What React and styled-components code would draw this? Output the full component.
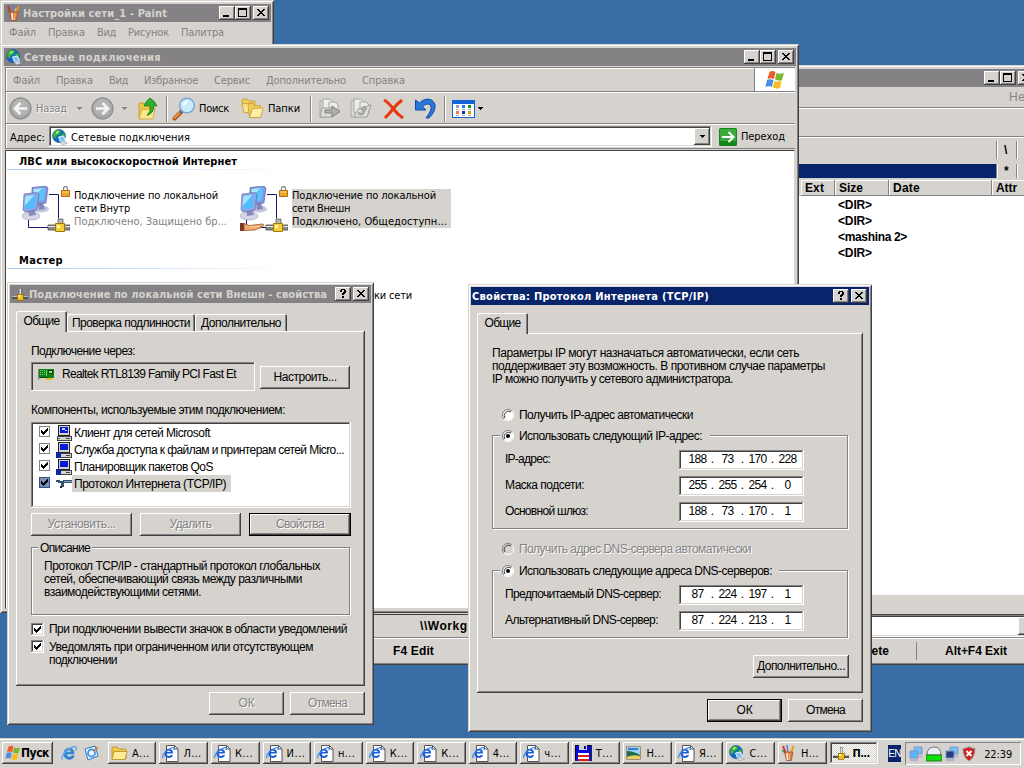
import React, { useLayoutEffect, useRef, useState } from 'react';
import styled, { createGlobalStyle, css } from 'styled-components';

const FACE = '#d6d3ce';
const SHADOW = '#848284';
const DARK = '#424142';
const NAVY = '#08246b';

const TAHOMA = '"DejaVu Sans Condensed", "DejaVu Sans", sans-serif';
const SANS = '"Liberation Sans", Arial, sans-serif';

const raised = css`
  box-shadow: inset -1px -1px ${DARK}, inset 1px 1px #fff, inset -2px -2px ${SHADOW};
`;
const sunken = css`
  box-shadow: inset -1px -1px #fff, inset 1px 1px ${SHADOW}, inset -2px -2px ${FACE}, inset 2px 2px ${DARK};
`;

const GlobalStyle = createGlobalStyle`
  *, *::before, *::after { box-sizing: border-box; }
  html, body { margin: 0; padding: 0; overflow: hidden; }
  svg { display: block; flex: none; }
`;

const Desktop = styled.div`
  position: relative;
  width: 1024px;
  height: 768px;
  overflow: hidden;
  background: #396da5;
  font-family: ${TAHOMA};
  font-stretch: condensed;
  font-size: 11px;
  line-height: 13px;
  color: #000;
`;

/* ---------- text set to a fixed run width ---------- */

const Run = styled.span`
  display: inline-block;
  flex: none;
  white-space: pre;
  font-family: ${(p) => (p.$sans ? SANS : TAHOMA)};
  font-stretch: ${(p) => (p.$sans ? 'normal' : 'condensed')};
  font-size: ${(p) => p.$size || (p.$sans ? 12 : 11)}px;
  font-weight: ${(p) => (p.$bold ? 700 : 400)};
  ${(p) => p.$off && css`color: ${SHADOW};`}
  ${(p) => p.$emboss && css`color: ${SHADOW}; text-shadow: 1px 1px #fff;`}
`;

function Text({ w, sans, bold, off, emboss, size, children }) {
  const ref = useRef(null);
  const [spacing, setSpacing] = useState(0);
  useLayoutEffect(() => {
    const range = document.createRange();
    range.selectNodeContents(ref.current);
    const natural = range.getBoundingClientRect().width;
    setSpacing((w - natural) / String(children).length);
  }, [w, children]);
  return (
    <Run ref={ref} $sans={sans} $bold={bold} $off={off} $emboss={emboss} $size={size}
      style={{ width: w, letterSpacing: spacing }}>
      {children}
    </Run>
  );
}

/* ---------- window chrome ---------- */

const Frame = styled.section`
  position: absolute;
  left: ${(p) => p.$x}px;
  top: ${(p) => p.$y}px;
  width: ${(p) => p.$w}px;
  height: ${(p) => p.$h}px;
  padding: ${(p) => (p.$sizable ? '4px 3px 4px 4px' : '3px')};
  display: flex;
  flex-direction: column;
  background: ${FACE};
  box-shadow: inset 1px 1px ${FACE}, inset -1px -1px ${DARK}, inset 2px 2px #fff, inset -2px -2px ${SHADOW};
`;
const TitleBar = styled.header`
  flex: none;
  height: 18px;
  display: flex;
  align-items: center;
  padding: 0 2px;
  background: ${(p) => (p.$active ? NAVY : SHADOW)};
  color: ${(p) => (p.$active ? '#fff' : FACE)};
`;
const TitleText = styled.div`
  flex: 1;
  display: flex;
  margin-left: ${(p) => p.$gap}px;
`;
const CaptionBox = styled.div`
  width: 16px;
  height: 14px;
  margin-left: ${(p) => (p.$gap ? 2 : 0)}px;
  background: ${FACE};
  ${raised}
`;

function CaptionButton({ kind }) {
  return (
    <CaptionBox $gap={kind === 'close'}>
      <svg width="16" height="14" viewBox="0 0 16 14" shapeRendering="crispEdges" fill="none" stroke="#000">
        {kind === 'min' && <path d="M4 10h6" strokeWidth="2" />}
        {kind === 'max' && <><path d="M3.500 3.500h8v7h-8z" /><path d="M3 3h9" strokeWidth="2" /></>}
        {kind === 'close' && (
          <path fill="#000" stroke="none" d="M4 3h2v1h1v1h2v-1h1v-1h2v1h-1v1h-1v1h-1v1h1v1h1v1h1v1h-2v-1h-1v-1h-2v1h-1v1h-2v-1h1v-1h1v-1h1v-1h-1v-1h-1v-1h-1z" />
        )}
        {kind === 'help' && (
          <path fill="#000" stroke="none" d="M5 3h1v-1h4v1h1v3h-1v1h-1v1h-2v-2h1v-1h1v-2h-2v2h-2zM7 9h2v2h-2z" />
        )}
      </svg>
    </CaptionBox>
  );
}

function Caption({ icon, title, w, gap = 2, active, buttons }) {
  return (
    <TitleBar $active={active}>
      {icon}
      <TitleText $gap={gap}>{title && <Text w={w} bold>{title}</Text>}</TitleText>
      {buttons.map((b) => <CaptionButton key={b} kind={b} />)}
    </TitleBar>
  );
}

/* ---------- icons ---------- */

const Flag = ({ s = 20 }) => (
  <svg width={s} height={s} viewBox="0 0 20 20">
    <path d="M4.500 2q3-2 6 0l-1.500 7q-3-1.500-6.500 0z" fill="#ef5a29" />
    <path d="M11.500 3q3 1.500 7.500 0l-2 7q-3 1.500-7-.5z" fill="#7bb82e" />
    <path d="M2 10q3-1.600 6.500 0l-1.600 7q-3-1.600-6.500 0z" fill="#4a8ee6" />
    <path d="M9.500 11q3 1.600 7.200 0l-1.700 7q-3 1.500-7.200-.4z" fill="#f8bd1c" />
  </svg>
);

const Globe = () => (
  <svg width="16" height="16" viewBox="0 0 16 16">
    <circle cx="7" cy="7" r="6.500" fill="#1668c4" stroke="#0d4a8e" strokeWidth=".6" />
    <path d="M3 2q3-2 6 0l-1 3-3 1-1 3-3-1q-.5-4 2-6zM9 6l3-2q1.500 2 1 5l-3 1z" fill="#38b536" />
    <path d="M4 3q2-1.500 3-1l-1 2-2 1z" fill="#b8f08c" />
    <path d="M6.500 8l5-1 2 5-5 1z" fill="#7cc4f8" stroke="#e4eef8" />
    <path d="M8 13.500l5-1 2.500 1.500-5 1.800z" fill="#dfe4ea" stroke="#788494" strokeWidth=".5" />
  </svg>
);

const Cup = () => (
  <svg width="16" height="16" viewBox="0 0 16 16">
    <path d="M2 1l3 8" stroke="#d83018" strokeWidth="2" />
    <path d="M6 0l1 9" stroke="#6a7ed8" strokeWidth="1.600" />
    <path d="M12.500 1l-3 8" stroke="#e89818" strokeWidth="2" />
    <path d="M1 5l4 4" stroke="#38a030" strokeWidth="1.200" />
    <path d="M10 3l-2 6" stroke="#e8d060" />
    <path d="M3.500 7h8.500l-1.700 8.500H5.500z" fill="#dc7a50" stroke="#9a4a30" strokeWidth=".7" />
    <path d="M6 8l.6 7" stroke="#fff0e4" strokeWidth="1.600" />
    <path d="M9 8l-.5 7" stroke="#f0c040" />
  </svg>
);

const Tee = ({ s = 16 }) => (
  <svg width={s} height={s} viewBox="0 0 16 16" shapeRendering="crispEdges">
    <path d="M7 2h2v6h-2z" fill="#e8e8e0" stroke="#555" strokeWidth=".5" />
    <path d="M0 10h16v3h-16z" fill="#555" />
    <path d="M0 10h16v1h-16z" fill="#b8b8b8" />
    <path d="M5 8h6v6h-6z" fill="#f0c020" stroke="#8c6400" strokeWidth=".7" />
    <path d="M6 9h2v2h-2z" fill="#fff4a0" />
  </svg>
);

const Connection = ({ shared }) => (
  <svg width="48" height="50" viewBox="0 0 48 50">
    <path d="M27 8.500h9.500v24M6.500 34v7.500h20" fill="none" stroke="#18186b" />
    <ellipse cx="19" cy="23" rx="8" ry="3.500" fill="#c4c6dc" />
    <path d="M16 17l5 0 2 6-6 1z" fill="#8488b8" />
    <path d="M10 1.500l14-1.500 2 2-2 15-14 2z" fill="#8b92d8" stroke="#5860a8" strokeWidth=".6" />
    <path d="M11.500 3l12-1.500-1.500 13-11 2z" fill="#5cc4fc" />
    <path d="M11.500 3l9-1-9 9z" fill="#a8e6ff" />
    <ellipse cx="9" cy="30" rx="9" ry="4" fill="#d4d6e6" stroke="#9a9cb8" strokeWidth=".6" />
    <path d="M6 23l6-1 2 7-7 1z" fill="#8a8cbc" />
    <path d="M2 8l13-1.500 2 1.500-2 16-12 2-2-2z" fill="#9aa0e0" stroke="#5860a8" strokeWidth=".6" />
    <path d="M3.500 10l11-1.500-1.500 13.500-10 2z" fill="#54bcfa" />
    <path d="M3.500 10l9-1-10 11z" fill="#a4e4ff" />
    <path d="M41.500 5v-2q0-2.500 2-2.500t2 2.500v2" fill="none" stroke="#888" strokeWidth="1.300" />
    <path d="M39.500 4.500h8v6h-8z" fill="#eda52c" stroke="#b06c10" />
    <path d="M40 6h7" stroke="#ffd780" />
    <path d="M36 33h5v6h-5z" fill="#b4b6b4" stroke="#606060" strokeWidth=".8" />
    <path d="M26 39h22v5h-22z" fill="#8c8e8c" stroke="#484848" strokeWidth=".8" />
    <path d="M26 40.500h22" stroke="#e4e4e4" />
    <path d="M33.500 37.500h9v8h-9z" fill="#f3cf38" stroke="#a07808" />
    <path d="M35 39h3v3h-3z" fill="#fff8b8" />
    {shared && <>
      <path d="M0 37h4v8h-4z" fill="#7a3c28" />
      <path d="M4 37.500q6 3.500 10 1.500l8-1q3 0 1 2.500l-8 3.500-11 .5z" fill="#f0a868" stroke="#8a4818" strokeWidth=".7" />
      <path d="M10 41l9-.5" stroke="#ffdcb0" />
    </>}
  </svg>
);

const RoundArrow = ({ flip }) => (
  <svg width="23" height="23" viewBox="0 0 23 23">
    <circle cx="11.500" cy="11.500" r="10.700" fill="#a5a5a5" stroke="#858585" />
    <circle cx="11.500" cy="10.500" r="8.500" fill="#b4b4b4" />
    <path transform={flip ? 'translate(23 0) scale(-1 1)' : undefined} d="M18 11.500H6M11.500 6L6 11.500l5.500 5.500" fill="none" stroke="#f4f4f4" strokeWidth="2.600" />
  </svg>
);

const FolderUp = () => (
  <svg width="20" height="24" viewBox="0 0 20 24">
    <path d="M1 7l1-1h4l1 2h7v13h-13z" fill="#f0c848" stroke="#c09428" strokeWidth=".8" />
    <path d="M1 22l3-10 4 1 1-1 8-1-2 11z" fill="#fce88c" stroke="#caa030" strokeWidth=".8" />
    <path d="M9 18.500q4-4.500 3-9.500h-6q2-5.500 6-8 5 3 7 8h-3.500q1 7-6.500 9.500z" fill="#2fae2c" stroke="#157214" strokeWidth=".7" />
  </svg>
);

const Magnifier = () => (
  <svg width="24" height="24" viewBox="0 0 24 24">
    <path d="M9.500 14.500L2.500 21.500" stroke="#9c4c18" strokeWidth="4" strokeLinecap="round" />
    <path d="M9.500 14L2.500 21" stroke="#f39548" strokeWidth="2.200" strokeLinecap="round" />
    <path d="M11.500 12.500L8 16" stroke="#5868a0" strokeWidth="2.500" />
    <circle cx="15" cy="8.500" r="7.300" fill="#c9ecfd" stroke="#7fa4d8" strokeWidth="1.500" />
    <path d="M11 9q0-5 5-5.500-1 4-5 5.500z" fill="#fff" />
  </svg>
);

const Folders = () => (
  <svg width="23" height="21" viewBox="0 0 23 21">
    <path d="M1 3l1-2h4l2 2h6v11h-11z" fill="#f3cc54" stroke="#c49a30" strokeWidth=".8" />
    <path d="M3 15l-2-9 11-1 3 8z" fill="#fbe48a" stroke="#c49a30" strokeWidth=".8" />
    <path d="M7 7l1-1.500h4l1.500 2h6v12h-11z" fill="#f3cc54" stroke="#c49a30" strokeWidth=".8" />
    <path d="M8.500 19.500l3-9 10.500-.7-2.500 9.700z" fill="#fdf0a4" stroke="#c49a30" strokeWidth=".8" />
  </svg>
);

const MoveTo = ({ copy }) => (
  <svg width="22" height="21" viewBox="0 0 22 21">
    <path d="M1 3h5l1 2v14h-6z" fill="#d8d8d4" stroke="#a8a8a4" />
    <path d="M4 1h7l3 3v11h-10z" fill="#ecece8" stroke="#a8a8a4" />
    <path d="M10 4h6l3 3v8h-9z" fill="#ecece8" stroke="#a8a8a4" />
    <path d={copy ? 'M4 19l4-8 13-4-4 12z' : 'M1 19l2-9h12l-2 9z'} fill="#dcdcd8" stroke="#a0a09c" />
    {copy
      ? <path d="M8 14q5 4 5-3l-2 1 3-4 3 3h-2q0 8-7 5" fill="#bbb" stroke="#858583" strokeWidth=".8" />
      : <path d="M6 12h7v-4l8 5.500-8 5.500v-4h-7z" fill="#b0b0ae" stroke="#80807e" />}
  </svg>
);

const RedCross = () => (
  <svg width="23" height="22" viewBox="0 0 23 22">
    <path d="M2 2q4 2 9 8.500T21 20" fill="none" stroke="#e83a0c" strokeWidth="3" />
    <path d="M20 2q-6 5-9 9T3 20" fill="none" stroke="#e83a0c" strokeWidth="3" />
  </svg>
);

const Undo = () => (
  <svg width="22" height="21" viewBox="0 0 22 21">
    <path d="M1.500 2v10h10.500l-3.500-3.500q4.500-4 8-1.500 2.500 4-4.500 13h3q7-7 6-13.500-3-7-10-5-3 .8-5.500 3.500z" fill="#2878dc" stroke="#0f4ca8" />
  </svg>
);

const Views = () => (
  <svg width="24" height="20" viewBox="0 0 24 20" shapeRendering="crispEdges">
    <path d="M.5 1.500h22v17h-22z" fill="#fff" stroke="#1464d8" />
    <path d="M0 1h23v4h-23z" fill="#1464d8" />
    <path d="M4 6h3v3h-3z" fill="#a090d0" /><path d="M10 6h3v3h-3z" fill="#1080f0" /><path d="M16 6h3v3h-3z" fill="#109810" />
    <path d="M4 12h3v3h-3z" fill="#f87848" /><path d="M10 12h3v3h-3z" fill="#1030a0" /><path d="M16 12h3v3h-3z" fill="#d0a000" />
    <path d="M4 10.500h3M10 10.500h3M16 10.500h3M4 16.500h3M10 16.500h3M16 16.500h3" stroke="#b0b0b0" />
  </svg>
);

const Go = () => (
  <svg width="18" height="18" viewBox="0 0 18 18">
    <rect width="18" height="18" rx="1.500" fill="#16861a" />
    <rect x="1" y="1" width="16" height="12" rx="1" fill="#39a93a" />
    <path d="M3 9h11M9.500 4l5 5-5 5" fill="none" stroke="#fff" strokeWidth="2" />
  </svg>
);

const Down = ({ c = '#000', s = 5 }) => (
  <svg width={s} height="3" viewBox="0 0 5 3" preserveAspectRatio="none" shapeRendering="crispEdges"><path d="M0 0h5v1h-1v1h-1v1h-1v-1h-1v-1h-1z" fill={c} /></svg>
);

const Card = () => (
  <svg width="17" height="13" viewBox="0 0 17 13" shapeRendering="crispEdges">
    <path d="M1 1h15v9h-15z" fill="#108018" />
    <path d="M0 1h1v11h-1z" fill="#888" />
    <path d="M2 2h1v1h-1zM4 2h1v1h-1zM6 2h1v1h-1zM2 4h1v1h-1zM4 4h1v1h-1zM6 4h1v1h-1zM2 6h1v1h-1zM4 6h1v1h-1zM6 6h1v1h-1zM8 2h1v6h-1z" fill="#63d468" />
    <path d="M10 2h5v4h-5z" fill="#074b0b" /><path d="M11 3h3v2h-3z" fill="#8ee08a" />
    <path d="M1 9h8v1h-8z" fill="#074b0b" />
    <path d="M8 10h6v2h-6z" fill="#e0c020" />
  </svg>
);

const Client = ({ service }) => (
  <svg width="17" height="16" viewBox="0 0 17 16" shapeRendering="crispEdges">
    <path d="M2.500.5h11v10h-11z" fill="#d6d3ce" stroke="#222" />
    <path d="M4 2h8v6h-8z" fill="#0818d8" />
    {!service && <path d="M6 3h3v2h-3zM9 5h2v1h-2z" fill="#a8e8ff" />}
    <path d="M1 11.500h14.500v4h-14.500z" fill="#d6d3ce" stroke="#444" />
    <path d="M10 13h4v1h-4z" fill="#444" />
    {!service && <path d="M2 13h2v1h-2z" fill="#20a020" />}
    {service && <path d="M0 10h5v6h-5z" fill="#0828a8" />}
  </svg>
);

const Protocol = () => (
  <svg width="17" height="12" viewBox="0 0 17 12" shapeRendering="crispEdges">
    <path d="M0 2h4v1h3v-1h9v3h-8v4h-3v-4h-3v-1h-2z" fill="#345070" />
    <path d="M8 3h8v1h-8z" fill="#88a8c8" />
    <path d="M4 8h2v2h-2z" fill="#222" />
  </svg>
);

const IE = ({ s = 16 }) => (
  <svg width={s} height={s} viewBox="0 0 16 16">
    <path d="M13 9H5.500q.4 3 3 3 1.700 0 2.200-1.200h2.800Q12 14.500 8.300 14.500 2.500 14 2.700 8.600 3.300 3.200 8.300 3q5 .3 4.700 6zM5.600 7.300h4.700q-.3-2.200-2.200-2.200-2 0-2.500 2.200z" fill="#2a8ae0" stroke="#1a66b8" strokeWidth=".4" />
    <path d="M1.500 14.500Q-.5 12 5 6.500 11 1.200 14.300 1.500q2 .8.200 4" fill="none" stroke="#55a8ee" strokeWidth="1.300" />
  </svg>
);

const IEPage = () => (
  <svg width="17" height="17" viewBox="0 0 17 17">
    <path d="M4.500.5h8l3.500 3.500v12.500H4.500z" fill="#fff" stroke="#555" />
    <path d="M12.500.5v3.500H16" fill="none" stroke="#555" />
    <path d="M11 8.500H4.600q.3 2.600 2.400 2.600 1.400 0 1.800-1h2.200q-1 3-4 3Q2.300 12.700 2.500 8.300 3 4 7 3.800q4.200.3 4 4.700zM4.800 7h3.900q-.3-1.600-1.800-1.600T4.800 7z" fill="#1e5fd8" />
    <path d="M1 13q-1.500-2 3-6.500 5-4 7.500-4 1.300.4.300 2.500" fill="none" stroke="#2f7fe8" strokeWidth="1.100" />
  </svg>
);

const Folder = () => (
  <svg width="17" height="16" viewBox="0 0 17 16">
    <path d="M1 3q0-1 1-1h4l2 2h6q1 0 1 1v9h-14z" fill="#efc84a" stroke="#b88e20" strokeWidth=".8" />
    <path d="M1 14.500l2-8h13l-2 8z" fill="#fdeb95" stroke="#b88e20" strokeWidth=".8" />
  </svg>
);

const Mail = () => (
  <svg width="16" height="16" viewBox="0 0 16 16">
    <path d="M1 4l10-3 3 10-10 4z" fill="#eef6ff" stroke="#2a78c8" />
    <circle cx="7.500" cy="8" r="3.500" fill="none" stroke="#3a94e0" strokeWidth="1.800" />
    <path d="M10 6l4-4" stroke="#e07020" strokeWidth="1.500" />
  </svg>
);

const Floppy = () => (
  <svg width="17" height="16" viewBox="0 0 17 16" shapeRendering="crispEdges">
    <path d="M0 0h16v16h-15l-1-1z" fill="#0808e0" stroke="#000" strokeWidth=".8" />
    <path d="M4 0h8v5h-8z" fill="#d6d3ce" /><path d="M9 1h2v3h-2z" fill="#0808a0" />
    <path d="M3 8h11v8h-11z" fill="#fff" /><path d="M3 10h11v2h-11zM3 14h11v2h-11z" fill="#e02010" />
  </svg>
);

const Picture = () => (
  <svg width="16" height="16" viewBox="0 0 16 16">
    <path d="M.5 1.500h14v13H.5z" fill="#9bd4f0" stroke="#a09080" />
    <path d="M1 6q6 0 13 4v4H1z" fill="#1c6c50" />
    <path d="M1 12q6-3 13-1v3H1z" fill="#e8d060" />
    <path d="M2 3h10v2H2z" fill="#3878c8" />
  </svg>
);

const Screens = ({ dim }) => (
  <svg width="16" height="16" viewBox="0 0 16 16">
    <path d="M6 1h8v7H6z" fill="#6cc4f8" stroke="#8890c8" />
    <path d="M2 5h8v7H2z" fill={dim ? '#243c80' : '#58b8f8'} stroke="#8890c8" />
    <ellipse cx="6" cy="14" rx="4.500" ry="1.300" fill="#b0b4d0" />
    <ellipse cx="12" cy="10.500" rx="2.500" ry="1" fill="#b0b4d0" />
  </svg>
);

const Dome = () => (
  <svg width="16" height="16" viewBox="0 0 16 16">
    <path d="M1 9Q1 1 8 1t7 8z" fill="#e8eef4" stroke="#707880" />
    <path d="M0 9h16v6H0z" fill="#08e008" stroke="#186818" strokeWidth=".8" />
  </svg>
);

const Shield = () => (
  <svg width="14" height="16" viewBox="0 0 14 16">
    <path d="M7 .8q3 1.700 6 1.700 0 9-6 12.500-6-3.500-6-12.500 3 0 6-1.700z" fill="#d02020" stroke="#989898" />
    <path d="M4.500 5l5 5M9.500 5l-5 5" stroke="#fff" strokeWidth="1.800" />
  </svg>
);

/* ---------- shared controls ---------- */

const MenuBar = styled.nav`
  flex: 1;
  display: flex;
  align-items: center;
  gap: 16px;
  padding: 2px 0 0 ${(p) => p.$left}px;
  color: ${SHADOW};
`;

const ButtonBox = styled.div`
  flex: none;
  width: ${(p) => p.$w}px;
  height: 23px;
  display: flex;
  align-items: center;
  justify-content: center;
  ${raised}
  ${(p) => p.$primary && css`
    box-shadow: inset 0 0 0 1px #000, inset -2px -2px ${DARK}, inset 2px 2px #fff, inset -3px -3px ${SHADOW};
  `}
`;
const Button = ({ w, tw, primary, off, children }) => (
  <ButtonBox $w={w} $primary={primary}>
    <Text w={tw} sans emboss={off}>{children}</Text>
  </ButtonBox>
);

const TabStrip = styled.div`
  display: flex;
  align-items: flex-end;
  height: 20px;
  margin: 8px 0 0 6px;
`;
const Tab = styled.div`
  position: relative;
  display: flex;
  align-items: center;
  justify-content: center;
  width: ${(p) => p.$w}px;
  height: ${(p) => (p.$on ? 21 : 17)}px;
  padding-top: ${(p) => (p.$on ? 0 : 2)}px;
  margin-bottom: ${(p) => (p.$on ? -1 : 0)}px;
  z-index: ${(p) => (p.$on ? 1 : 0)};
  background: ${FACE};
  border-radius: 2px 2px 0 0;
  box-shadow: inset 1px 1px #fff, inset -1px 0 ${DARK}, inset -2px 0 ${SHADOW};
`;
const TabPage = styled.div`
  flex: none;
  width: ${(p) => p.$w}px;
  height: ${(p) => p.$h}px;
  margin-left: 6px;
  padding-left: 15px;
  ${raised}
`;
const Footer = styled.div`
  display: flex;
  justify-content: flex-end;
  gap: 6px;
  padding: 6px 6px 0 0;
`;
const Line = styled.div`
  display: flex;
  align-items: center;
  height: 14px;
  margin-top: ${(p) => p.$mt || 0}px;
  gap: 5px;
`;
const Paragraph = styled.div`
  display: flex;
  flex-direction: column;
  margin-top: ${(p) => p.$mt || 0}px;
`;
const Group = styled.div`
  width: ${(p) => p.$w}px;
  height: ${(p) => p.$h}px;
  margin-top: ${(p) => p.$mt}px;
  border: 1px solid ${SHADOW};
  box-shadow: inset 1px 1px #fff, 1px 1px #fff;
`;
const Legend = styled.div`
  display: flex;
  align-items: center;
  gap: 5px;
  width: ${(p) => p.$w}px;
  height: 14px;
  margin: -7px 0 0 ${(p) => p.$left || 7}px;
  padding-left: 2px;
  background: ${FACE};
`;

const CheckBox = styled.div`
  flex: none;
  width: 13px;
  height: 13px;
  background: #fff;
  ${sunken}
`;
const FlatCheckBox = styled.div`
  flex: none;
  width: 11px;
  height: 11px;
  margin-bottom: 3px;
  border: 1px solid ${(p) => (p.$sel ? '#385080' : SHADOW)};
  background: ${(p) => (p.$sel ? '#7b90b8' : '#fff')};
`;
const Tick = ({ flat }) => (
  <svg width={flat ? 9 : 13} height={flat ? 9 : 13} viewBox={flat ? '2 2 9 9' : '0 0 13 13'} shapeRendering="crispEdges">
    <path d="M3 5h1v1h1v1h1v-1h1v-1h1v-1h1v-1h1v3h-1v1h-1v1h-1v1h-1v1h-1v-1h-1v-1h-1z" />
  </svg>
);
const Radio = ({ on, off }) => (
  <svg width="12" height="12" viewBox="0 0 12 12">
    <circle cx="6" cy="6" r="5" fill={off ? FACE : '#fff'} />
    <path d="M10 2A5.500 5.500 0 0 0 2 10" fill="none" stroke={SHADOW} />
    <path d="M9 3A4.300 4.300 0 0 0 3 9" fill="none" stroke={DARK} />
    <path d="M10 2A5.500 5.500 0 0 1 2 10" fill="none" stroke="#fff" />
    {on && <circle cx="6" cy="6" r="2" />}
  </svg>
);

/* ---------- Paint ---------- */

const PaintMenu = styled.div`
  display: flex;
  align-items: center;
  gap: 12px;
  height: 20px;
  padding-left: 5px;
  color: ${SHADOW};
`;

function PaintWindow() {
  return (
    <Frame $x={0} $y={0} $w={274} $h={90} $sizable>
      <Caption icon={<Cup />} title="Настройки сети_1 - Paint" w={144} gap={1} buttons={['min', 'max', 'close']} />
      <PaintMenu>
        <Text w={27}>Файл</Text><Text w={37}>Правка</Text><Text w={19}>Вид</Text>
        <Text w={41}>Рисунок</Text><Text w={43}>Палитра</Text>
      </PaintMenu>
    </Frame>
  );
}

/* ---------- file manager ---------- */

const FmBand = styled.div`
  flex: none;
  display: flex;
  justify-content: flex-end;
  align-items: center;
  height: ${(p) => p.$h}px;
  border-bottom: 1px solid ${SHADOW};
  box-shadow: 0 1px #fff;
  color: ${SHADOW};
`;
const FmPathRow = styled.div`
  flex: none;
  display: flex;
  justify-content: flex-end;
  height: ${(p) => p.$h}px;
  margin-top: ${(p) => p.$mt}px;
`;
const FmPath = styled.div`
  flex: 1;
  background: ${(p) => (p.$navy ? NAVY : FACE)};
`;
const FmKey = styled.div`
  width: 20px;
  display: flex;
  align-items: center;
  padding-left: 7px;
  border-left: 1px solid ${SHADOW};
  box-shadow: inset 1px 0 #fff;
`;
const FmHead = styled.div`
  flex: none;
  display: flex;
  justify-content: flex-end;
  height: 16px;
  margin-top: 2px;
`;
const FmCol = styled.div`
  display: flex;
  align-items: center;
  width: ${(p) => p.$w}px;
  padding-left: 4px;
  box-shadow: inset -1px -1px ${SHADOW}, inset 1px 1px #fff;
`;
const FmList = styled.div`
  flex: none;
  height: 399px;
  padding: 1px 0 0 734px;
  background: #fff;
  line-height: 16px;
  display: flex;
  flex-direction: column;
`;
const FmStatus = styled.div`
  flex: none;
  height: 20px;
  border-bottom: 1px solid ${DARK};
`;
const FmCommand = styled.div`
  flex: none;
  display: flex;
  height: 23px;
  border-bottom: 1px solid ${SHADOW};
`;
const FmPrompt = styled.div`
  width: 560px;
  display: flex;
  align-items: center;
  padding-left: 316px;
`;
const FmInput = styled.div`
  flex: 1;
  display: flex;
  justify-content: flex-end;
  padding: 2px 2px 2px 0;
  background: #fff;
  ${sunken}
`;
const FmDrop = styled.div`
  width: 16px;
  display: flex;
  align-items: center;
  justify-content: center;
  background: ${FACE};
  ${raised}
`;
const FmKeys = styled.div`
  flex: 1;
  display: flex;
  align-items: center;
  padding-top: 2px;
  border-top: 1px solid #fff;
`;
const FmFn = styled.div`
  width: ${(p) => p.$w}px;
  height: 18px;
  display: flex;
  align-items: center;
  padding-left: ${(p) => p.$pl}px;
  border-right: 1px solid ${SHADOW};
`;

function FileManager() {
  return (
    <Frame $x={100} $y={65} $w={939} $h={600} $sizable>
      <Caption title="" w={0} buttons={['min', 'max', 'close']} />
      <FmBand $h={21}><Text w={27} off sans>Help</Text></FmBand>
      <FmBand $h={29} />
      <FmPathRow $h={18} $mt={4}>
        <FmPath /><FmKey><Text w={6} sans bold>\</Text></FmKey><FmKey />
      </FmPathRow>
      <FmPathRow $h={14} $mt={5}>
        <FmPath $navy /><FmKey><Text w={6} sans bold>*</Text></FmKey><FmKey><Down /></FmKey>
      </FmPathRow>
      <FmHead>
        <FmCol $w={34}><Text w={19} sans bold>Ext</Text></FmCol>
        <FmCol $w={54}><Text w={24} sans bold>Size</Text></FmCol>
        <FmCol $w={103}><Text w={27} sans bold>Date</Text></FmCol>
        <FmCol $w={44}><Text w={21} sans bold>Attr</Text></FmCol>
      </FmHead>
      <FmList>
        <Text w={34} sans bold>{'<DIR>'}</Text>
        <Text w={34} sans bold>{'<DIR>'}</Text>
        <Text w={69} sans bold>{'<mashina 2>'}</Text>
        <Text w={34} sans bold>{'<DIR>'}</Text>
      </FmList>
      <FmStatus />
      <FmCommand>
        <FmPrompt><Text w={84} sans bold>{'\\\\Workgroup>'}</Text></FmPrompt>
        <FmInput><FmDrop><Down /></FmDrop></FmInput>
      </FmCommand>
      <FmKeys>
        <FmFn $w={420} $pl={289}><Text w={41} sans bold>F4 Edit</Text></FmFn>
        <FmFn $w={393} $pl={311}><Text w={54} sans bold>F8 Delete</Text></FmFn>
        <FmFn $w={118} $pl={28}><Text w={62} sans bold>Alt+F4 Exit</Text></FmFn>
      </FmKeys>
    </Frame>
  );
}

/* ---------- network connections ---------- */

const Rebar = styled.div`
  flex: none;
  margin: 1px 1px 0 1px;
  border: 1px solid ${SHADOW};
  border-right: 0;
  box-shadow: inset 1px 1px #fff;
`;
const Band = styled.div`
  display: flex;
  align-items: stretch;
  height: ${(p) => p.$h}px;
  border-bottom: ${(p) => (p.$last ? 0 : 1)}px solid ${SHADOW};
  box-shadow: ${(p) => (p.$last ? 'none' : '0 1px #fff')};
`;
const LogoBox = styled.div`
  width: 41px;
  display: flex;
  align-items: center;
  justify-content: center;
  background: #fff;
  border-left: 1px solid ${SHADOW};
`;
const Tools = styled.div`
  display: flex;
  align-items: center;
  padding: 2px 0 0 3px;
`;
const Tool = styled.div`
  display: flex;
  align-items: center;
  gap: ${(p) => p.$gap || 4}px;
  margin-right: ${(p) => p.$mr}px;
`;
const ToolRule = styled.div`
  width: 2px;
  height: 26px;
  margin-right: ${(p) => p.$mr}px;
  background: linear-gradient(90deg, ${SHADOW} 50%, #fff 50%);
`;
const AddressLabel = styled.div`
  width: 43px;
  display: flex;
  align-items: center;
  padding: 2px 0 0 4px;
`;
const Combo = styled.div`
  width: 663px;
  height: 21px;
  margin-top: 2px;
  display: flex;
  align-items: center;
  gap: 3px;
  padding: 2px 2px 2px 3px;
  background: #fff;
  ${sunken}
`;
const ComboValue = styled.div`
  flex: 1;
  display: flex;
  padding-top: 1px;
`;
const ComboArrow = styled.div`
  width: 16px;
  height: 17px;
  display: flex;
  align-items: center;
  justify-content: center;
  background: ${FACE};
  ${raised}
`;
const GoButton = styled.div`
  display: flex;
  align-items: center;
  gap: 4px;
  margin-left: 3px;
  padding: 1px 0 0 4px;
`;
const Content = styled.div`
  flex: 1;
  margin: 1px 1px 0 1px;
  padding: 3px 0 0 1px;
  background: #fff;
  border-top: 1px solid ${DARK};
  border-left: 1px solid ${DARK};
  border-right: 1px solid ${FACE};
  border-bottom: 1px solid ${FACE};
`;
const SectionTitle = styled.h2`
  margin: 0;
  height: 15px;
  padding-left: 12px;
  display: flex;
  align-items: center;
`;
const SectionRule = styled.div`
  width: 285px;
  height: 1px;
  background: linear-gradient(90deg, #a4c8f0, #fff);
`;
const Tiles = styled.div`
  display: flex;
  padding: 16px 0 0 15px;
  height: 83px;
`;
const Tile = styled.div`
  width: 218px;
  display: flex;
  align-items: flex-start;
  gap: 4px;
`;
const TileText = styled.div`
  display: flex;
  flex-direction: column;
  width: ${(p) => (p.$sel ? 159 : 155)}px;
  margin-top: 3px;
  background: ${(p) => (p.$sel ? FACE : 'none')};
`;
const WizardItem = styled.div`
  margin: 20px 0 0 367px;
`;

function NetworkWindow() {
  return (
    <Frame $x={0} $y={44} $w={799} $h={569} $sizable>
      <Caption icon={<Globe />} title="Сетевые подключения" w={137} buttons={['min', 'max', 'close']} />
      <Rebar>
        <Band $h={24}>
          <MenuBar $left={7}>
            <Text w={27}>Файл</Text><Text w={37}>Правка</Text><Text w={19}>Вид</Text>
            <Text w={54}>Избранное</Text><Text w={36}>Сервис</Text>
            <Text w={80}>Дополнительно</Text><Text w={43}>Справка</Text>
          </MenuBar>
          <LogoBox><Flag /></LogoBox>
        </Band>
        <Band $h={32}>
          <Tools>
            <Tool $mr={10}><RoundArrow /><Text w={31} emboss>Назад</Text></Tool>
            <Tool $mr={9}><Down c={SHADOW} /></Tool>
            <Tool $mr={8}><RoundArrow flip /></Tool>
            <Tool $mr={11}><Down c={SHADOW} /></Tool>
            <Tool $mr={8}><FolderUp /></Tool>
            <ToolRule $mr={4} />
            <Tool $mr={12} $gap={3}><Magnifier /><Text w={30}>Поиск</Text></Tool>
            <Tool $mr={10}><Folders /><Text w={32}>Папки</Text></Tool>
            <ToolRule $mr={7} />
            <Tool $mr={9}><MoveTo /></Tool>
            <Tool $mr={10}><MoveTo copy /></Tool>
            <Tool $mr={9}><RedCross /></Tool>
            <Tool $mr={8}><Undo /></Tool>
            <ToolRule $mr={6} />
            <Tool $gap={2}><Views /><Down /></Tool>
          </Tools>
        </Band>
        <Band $h={24} $last>
          <AddressLabel><Text w={35}>Адрес:</Text></AddressLabel>
          <Combo>
            <Globe />
            <ComboValue><Text w={119}>Сетевые подключения</Text></ComboValue>
            <ComboArrow><Down /></ComboArrow>
          </Combo>
          <GoButton><Go /><Text w={44}>Переход</Text></GoButton>
        </Band>
      </Rebar>
      <Content>
        <SectionTitle><Text w={218} bold>ЛВС или высокоскоростной Интернет</Text></SectionTitle>
        <SectionRule />
        <Tiles>
          <Tile>
            <Connection />
            <TileText>
              <Text w={144}>Подключение по локальной</Text>
              <Text w={56}>сети Внутр</Text>
              <Text w={153} off>Подключено, Защищено бр...</Text>
            </TileText>
          </Tile>
          <Tile>
            <Connection shared />
            <TileText $sel>
              <Text w={144}>Подключение по локальной</Text>
              <Text w={58}>сети Внешн</Text>
              <Text w={155}>Подключено, Общедоступн...</Text>
            </TileText>
          </Tile>
        </Tiles>
        <SectionTitle><Text w={44} bold>Мастер</Text></SectionTitle>
        <SectionRule />
        <WizardItem><Text w={38}>ки сети</Text></WizardItem>
      </Content>
    </Frame>
  );
}

/* ---------- connection properties ---------- */

const AdapterRow = styled.div`
  display: flex;
  gap: 5px;
  margin-top: 4px;
  height: 30px;
`;
const AdapterBox = styled.div`
  width: 224px;
  height: 29px;
  display: flex;
  align-items: center;
  gap: 7px;
  padding: 0 0 4px 7px;
  box-shadow: inset -1px -1px #fff, inset 1px 1px ${SHADOW}, inset 2px 2px ${DARK};
`;
const AdapterAction = styled.div`
  padding-top: 4px;
`;
const ComponentList = styled.div`
  width: 320px;
  height: 86px;
  margin-top: 5px;
  padding: 2px 2px 2px 8px;
  background: #fff;
  ${sunken}
`;
const ComponentRow = styled.div`
  display: flex;
  align-items: center;
  gap: 6px;
  height: 17px;
`;
const ComponentName = styled.div`
  display: flex;
  align-items: center;
  height: 17px;
  margin-left: -7px;
  padding: 1px 5px 0 2px;
  background: ${(p) => (p.$sel ? FACE : 'none')};
`;
const ButtonRow = styled.div`
  display: flex;
  gap: ${(p) => p.$gap}px;
  margin-top: ${(p) => p.$mt}px;
  padding-left: ${(p) => p.$left || 0}px;
`;
const Description = styled.div`
  display: flex;
  flex-direction: column;
  padding: 5px 0 0 12px;
`;
const CheckPair = styled.div`
  display: flex;
  align-items: flex-start;
  gap: 5px;
  margin-top: 4px;
`;

const components = [
  { name: 'Клиент для сетей Microsoft', w: 136, icon: <Client /> },
  { name: 'Служба доступа к файлам и принтерам сетей Micro...', w: 270, icon: <Client service /> },
  { name: 'Планировщик пакетов QoS', w: 139, icon: <Client service /> },
  { name: 'Протокол Интернета (TCP/IP)', w: 152, icon: <Protocol />, sel: true },
];

function ConnectionDialog() {
  return (
    <Frame $x={7} $y={282} $w={367} $h={443}>
      <Caption icon={<Tee />} title="Подключение по локальной сети Внешн - свойства" w={298} gap={1} buttons={['help', 'close']} />
      <TabStrip>
        <Tab $w={51} $on><Text w={36} sans>Общие</Text></Tab>
        <Tab $w={128}><Text w={118} sans>Проверка подлинности</Text></Tab>
        <Tab $w={92}><Text w={80} sans>Дополнительно</Text></Tab>
      </TabStrip>
      <TabPage $w={349} $h={355}>
        <Line $mt={13}><Text w={104} sans>Подключение через:</Text></Line>
        <AdapterRow>
          <AdapterBox><Card /><Text w={174} sans>Realtek RTL8139 Family PCI Fast Et</Text></AdapterBox>
          <AdapterAction><Button w={90} tw={63}>Настроить...</Button></AdapterAction>
        </AdapterRow>
        <Line $mt={11}><Text w={254} sans>Компоненты, используемые этим подключением:</Text></Line>
        <ComponentList>
          {components.map((c) => (
            <ComponentRow key={c.name}>
              <FlatCheckBox $sel={c.sel}><Tick flat /></FlatCheckBox>
              {c.icon}
              <ComponentName $sel={c.sel}><Text w={c.w} sans>{c.name}</Text></ComponentName>
            </ComponentRow>
          ))}
        </ComponentList>
        <ButtonRow $mt={5} $gap={8}>
          <Button w={101} tw={68} off>Установить...</Button>
          <Button w={101} tw={42} off>Удалить</Button>
          <Button w={102} tw={48} off primary>Свойства</Button>
        </ButtonRow>
        <Group $w={319} $h={68} $mt={11}>
          <Legend $w={54} $left={6}><Text w={50} sans>Описание</Text></Legend>
          <Description>
            <Text w={276} sans>Протокол TCP/IP - стандартный протокол глобальных</Text>
            <Text w={258} sans>сетей, обеспечивающий связь между различными</Text>
            <Text w={157} sans>взаимодействующими сетями.</Text>
          </Description>
        </Group>
        <Line $mt={7}><CheckBox><Tick /></CheckBox><Text w={298} sans>При подключении вывести значок в области уведомлений</Text></Line>
        <CheckPair>
          <CheckBox><Tick /></CheckBox>
          <Paragraph $mt={1}>
            <Text w={264} sans>Уведомлять при ограниченном или отсутствующем</Text>
            <Text w={68} sans>подключении</Text>
          </Paragraph>
        </CheckPair>
      </TabPage>
      <Footer>
        <Button w={75} tw={16} off>ОК</Button>
        <Button w={75} tw={39} off>Отмена</Button>
      </Footer>
    </Frame>
  );
}

/* ---------- TCP/IP properties ---------- */

const FieldRow = styled.div`
  display: flex;
  align-items: center;
  height: 20px;
  margin: ${(p) => (p.$first ? 7 : 6)}px 0 0 12px;
`;
const FieldLabel = styled.div`
  width: 174px;
  padding-bottom: 2px;
`;
const IpBox = styled.div`
  width: 125px;
  height: 20px;
  display: flex;
  align-items: center;
  padding: 0 0 2px 6px;
  background: #fff;
  ${sunken}
`;
const Octet = styled.div`
  width: 25px;
  text-align: center;
`;
const Dot = styled.div`
  width: 5px;
  text-align: center;
  font: 12px/13px ${SANS};
`;
const OptionLine = styled(Line)`
  padding-left: 10px;
`;

function IpField({ label, w, value, first }) {
  return (
    <FieldRow $first={first}>
      <FieldLabel><Text w={w} sans>{label}</Text></FieldLabel>
      <IpBox>
        {value.map((v, i) => (
          <React.Fragment key={i}>
            {i > 0 && <Dot>.</Dot>}
            <Octet><Text w={v.length * 6} sans>{v}</Text></Octet>
          </React.Fragment>
        ))}
      </IpBox>
    </FieldRow>
  );
}

function TcpDialog() {
  return (
    <Frame $x={468} $y={284} $w={404} $h={448}>
      <Caption active title="Свойства: Протокол Интернета (TCP/IP)" w={237} gap={-1} buttons={['help', 'close']} />
      <TabStrip><Tab $w={51} $on><Text w={36} sans>Общие</Text></Tab></TabStrip>
      <TabPage $w={386} $h={360}>
        <Paragraph $mt={14}>
          <Text w={307} sans>Параметры IP могут назначаться автоматически, если сеть</Text>
          <Text w={333} sans>поддерживает эту возможность. В противном случае параметры</Text>
          <Text w={241} sans>IP можно получить у сетевого администратора.</Text>
        </Paragraph>
        <OptionLine $mt={22}><Radio /><Text w={174} sans>Получить IP-адрес автоматически</Text></OptionLine>
        <Group $w={356} $h={94} $mt={13}>
          <Legend $w={210}><Radio on /><Text w={183} sans>Использовать следующий IP-адрес:</Text></Legend>
          <IpField first label="IP-адрес:" w={45} value={['188', '73', '170', '228']} />
          <IpField label="Маска подсети:" w={79} value={['255', '255', '254', '0']} />
          <IpField label="Основной шлюз:" w={83} value={['188', '73', '170', '1']} />
        </Group>
        <OptionLine $mt={13}><Radio off /><Text w={232} sans emboss>Получить адрес DNS-сервера автоматически</Text></OptionLine>
        <Group $w={356} $h={68} $mt={14}>
          <Legend $w={279}><Radio on /><Text w={253} sans>Использовать следующие адреса DNS-серверов:</Text></Legend>
          <IpField first label="Предпочитаемый DNS-сервер:" w={156} value={['87', '224', '197', '1']} />
          <IpField label="Альтернативный DNS-сервер:" w={153} value={['87', '224', '213', '1']} />
        </Group>
        <ButtonRow $mt={17} $left={261}><Button w={96} tw={88}>Дополнительно...</Button></ButtonRow>
      </TabPage>
      <Footer>
        <Button w={75} tw={16} primary>ОК</Button>
        <Button w={75} tw={39}>Отмена</Button>
      </Footer>
    </Frame>
  );
}

/* ---------- taskbar ---------- */

const Bar = styled.footer`
  position: absolute;
  left: 0;
  top: 738px;
  width: 1024px;
  height: 30px;
  display: flex;
  align-items: flex-start;
  padding: 4px 3px 0 2px;
  background: ${FACE};
  box-shadow: inset 0 1px ${FACE}, inset 0 2px #fff;
`;
const Start = styled.div`
  width: 51px;
  height: 22px;
  display: flex;
  align-items: center;
  gap: 0;
  padding-left: 3px;
  ${raised}
`;
const Quick = styled.div`
  width: 55px;
  height: 22px;
  display: flex;
  align-items: center;
  gap: 7px;
  padding-left: 8px;
`;
const Tasks = styled.div`
  width: 771px;
  display: flex;
  gap: 3px;
`;
const Task = styled.div`
  flex: 1;
  min-width: 0;
  height: 22px;
  display: flex;
  align-items: center;
  gap: 4px;
  padding-left: 3px;
  ${raised}
  ${(p) => p.$on && css`
    background: repeating-conic-gradient(#fff 0 25%, ${FACE} 0 50%) 0 0 / 2px 2px;
    ${sunken}
  `}
`;
const Lang = styled.div`
  width: 13px;
  height: 17px;
  margin: 3px 4px 0 10px;
  background: ${NAVY};
  color: #fff;
  line-height: 17px;
`;
const Tray = styled.div`
  width: 116px;
  height: 23px;
  display: flex;
  align-items: center;
  gap: 2px;
  padding-left: 3px;
  box-shadow: inset 1px 1px ${SHADOW}, inset -1px -1px #fff;
`;
const Clock = styled.div`
  margin-left: 6px;
  padding-top: 1px;
`;

const tasks = [
  ['А...', <Folder />, 18], ['Л...', <IEPage />, 18], ['К...', <IEPage />, 18], ['И...', <IEPage />, 19],
  ['н...', <IEPage />, 17], ['К...', <IEPage />, 18], ['К...', <IEPage />, 18], ['4...', <IEPage />, 17],
  ['ч...', <IEPage />, 17], ['Т...', <Floppy />, 17], ['Н...', <Picture />, 18], ['Я...', <IEPage />, 18],
  ['С...', <Globe />, 18], ['Н...', <Cup />, 18], ['П...', <Tee />, 17],
];

function Taskbar() {
  return (
    <Bar>
      <Start><Flag s={16} /><Text w={28} bold size={12}>Пуск</Text></Start>
      <Quick><IE /><Mail /></Quick>
      <Tasks>
        {tasks.map(([label, icon, w], i) => (
          <Task key={i} $on={i === 14}>{icon}<Text w={w} bold={i === 14}>{label}</Text></Task>
        ))}
      </Tasks>
      <Lang><Text w={13} size={10} sans>EN</Text></Lang>
      <Tray>
        <Screens /><Dome /><Screens dim /><Shield />
        <Clock><Text w={28}>22:39</Text></Clock>
      </Tray>
    </Bar>
  );
}

export default function App() {
  return (
    <>
      <GlobalStyle />
      <Desktop>
        <PaintWindow />
        <FileManager />
        <NetworkWindow />
        <ConnectionDialog />
        <TcpDialog />
        <Taskbar />
      </Desktop>
    </>
  );
}
